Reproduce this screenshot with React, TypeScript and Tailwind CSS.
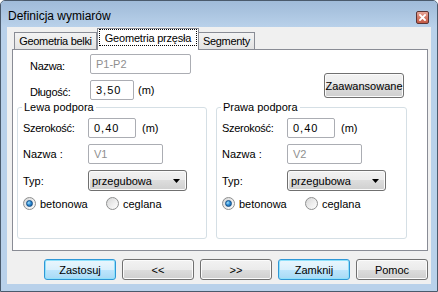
import React from "react";

const btnNormal =
  "border-[#707070] bg-[linear-gradient(to_bottom,#f2f2f2_0%,#ebebeb_50%,#dddddd_50%,#cfcfcf_100%)] shadow-[inset_0_0_0_1px_#fbfbfb]";
const btnDefault =
  "border-[#2f97d6] bg-[linear-gradient(to_bottom,#eaf6fd_0%,#d9f0fc_50%,#bee6fd_50%,#a7d9f5_100%)] shadow-[inset_0_0_0_1px_#8fe1fb]";

function Btn({ children, def }: { children: React.ReactNode; def?: boolean }) {
  return (
    <div
      className={`flex h-[21px] w-[72px] items-center justify-center rounded-[3px] border text-[11px] leading-[14px] text-black ${
        def ? btnDefault : btnNormal
      }`}
    >
      {children}
    </div>
  );
}

function Field({
  w,
  value,
  disabled,
  wide,
}: {
  w: string;
  value: string;
  disabled?: boolean;
  wide?: boolean;
}) {
  return (
    <div
      className={`flex h-[20px] shrink-0 items-center rounded-[2px] border border-[#abadb3] bg-white pl-[5px] text-[11px] leading-[14px] ${w} ${
        disabled ? "text-[#8f8f8f]" : "text-black"
      } ${wide ? "tracking-[1px]" : ""}`}
    >
      {value}
    </div>
  );
}

function Select() {
  return (
    <div className="flex h-[21px] w-[99px] items-center justify-between rounded-[3px] border border-[#707070] bg-[linear-gradient(to_bottom,#f2f2f2_0%,#ebebeb_50%,#dddddd_50%,#cfcfcf_100%)] pl-[3px] pr-[6px] text-[11px] leading-[14px] text-black shadow-[inset_0_0_0_1px_#fbfbfb]">
      <span>przegubowa</span>
      <svg width="7" height="4" viewBox="0 0 7 4">
        <path d="M0 0H7L3.5 4Z" fill="#000" />
      </svg>
    </div>
  );
}

function Radio({ checked, label }: { checked?: boolean; label: string }) {
  return (
    <div className="flex items-center">
      <span className="flex h-[13px] w-[13px] items-center justify-center rounded-full border border-[#8e8f8f] bg-[linear-gradient(135deg,#d6d6d6_0%,#f0f0f0_60%,#fdfdfd_100%)]">
        {checked && (
          <span className="h-[7px] w-[7px] rounded-full border border-[#124d86] bg-[radial-gradient(circle_at_35%_35%,#a6e3fc_0%,#2f8fd8_45%,#0f4f8f_100%)]" />
        )}
      </span>
      <span className="ml-[4px] text-[11px] leading-[14px] text-black">{label}</span>
    </div>
  );
}

function Group({ title, name, w }: { title: string; name: string; w: string }) {
  return (
    <fieldset className={`h-[139px] ${w} rounded-[3px] border border-[#d5dfe5] px-[5px]`}>
      <legend className="ml-[-1px] px-[2px] text-[11px] leading-[14px] text-black">{title}</legend>
      <div className="flex flex-col gap-[6px] pt-[4px]">
        <div className="flex items-center">
          <span className="w-[65px] text-[11px] leading-[14px] tracking-[-0.3px]">Szerokość:</span>
          <Field w="w-[48px]" value="0,40" wide />
          <span className="ml-[6px] text-[11px] leading-[14px]">(m)</span>
        </div>
        <div className="flex items-center">
          <span className="w-[65px] text-[11px] leading-[14px]">Nazwa :</span>
          <Field w="w-[75px]" value={name} disabled />
        </div>
        <div className="flex items-center">
          <span className="w-[65px] text-[11px] leading-[14px]">Typ:</span>
          <Select />
        </div>
        <div className="flex h-[13px] items-center">
          <div className="w-[83px]">
            <Radio checked label="betonowa" />
          </div>
          <Radio label="ceglana" />
        </div>
      </div>
    </fieldset>
  );
}

export default function App() {
  return (
    <div className="flex h-[292px] w-[438px] flex-col rounded-t-[5px] border border-[#4a5a6c] bg-[#b9d1ea] font-['Liberation_Sans',Arial,sans-serif] text-black">
      {/* title bar */}
      <div className="flex h-[26px] shrink-0 items-start justify-between rounded-t-[4px] bg-[linear-gradient(to_bottom,#a0bbd9_0%,#a9c3df_40%,#b9d1ea_100%)] pl-[7px] pr-[8px]">
        <span className="mt-[8px] text-[12px] leading-[14px] text-black">Definicja wymiarów</span>
        <div className="mt-[10px] flex h-[13px] w-[13px] items-center justify-center rounded-[2px] border border-[#5b3434] bg-[linear-gradient(to_bottom,#e8a597_0%,#d47a68_50%,#c45a45_100%)]">
          <svg width="7" height="7" viewBox="0 0 7 7">
            <path d="M1 1L6 6M6 1L1 6" stroke="#fff" strokeWidth="1.8" strokeLinecap="square" />
          </svg>
        </div>
      </div>

      {/* client area */}
      <div className="mx-[6px] flex h-[257px] w-[424px] flex-col bg-[#f0f0f0] pl-[5px] pr-[3px]">
        {/* tab strip */}
        <div className="flex h-[22px] items-end pl-[2px]">
          <div className="flex h-[17px] w-[83px] items-center justify-center border border-b-0 border-[#898c95] bg-[linear-gradient(to_bottom,#f3f3f3,#e3e3e3)] text-[11px] leading-[14px] tracking-[-0.3px]">
            Geometria belki
          </div>
          <div className="relative z-10 -mb-px flex h-[22px] w-[102px] items-start justify-center border border-b-0 border-[#898c95] bg-white">
            <div className="flex h-[17px] w-[98px] items-center justify-center border border-dotted border-black text-[11px] leading-[14px] tracking-[-0.2px]">
              Geometria przęsła
            </div>
          </div>
          <div className="-ml-px flex h-[17px] w-[57px] items-center justify-center border border-b-0 border-[#898c95] bg-[linear-gradient(to_bottom,#f3f3f3,#e3e3e3)] text-[11px] leading-[14px] tracking-[-0.3px]">
            Segmenty
          </div>
        </div>

        {/* tab panel */}
        <div className="flex h-[202px] flex-col border border-[#898c95] bg-white pl-[4px]">
          <div className="flex justify-between">
            <div className="flex flex-col gap-[6px] pl-[13px] pt-[4px]">
              <div className="flex items-center">
                <span className="mt-[3px] w-[60px] text-[11px] leading-[14px] tracking-[-0.3px]">Nazwa:</span>
                <Field w="w-[101px]" value="P1-P2" disabled />
              </div>
              <div className="flex items-center">
                <span className="mt-[3px] w-[60px] text-[11px] leading-[14px] tracking-[-0.3px]">Długość:</span>
                <Field w="w-[44px]" value="3,50" wide />
                <span className="ml-[4px] text-[11px] leading-[14px]">(m)</span>
              </div>
            </div>
            <div className="mr-[23px] mt-[23px] flex h-[25px] w-[80px] items-center justify-center rounded-[3px] border border-[#707070] bg-[linear-gradient(to_bottom,#f2f2f2_0%,#ebebeb_50%,#dddddd_50%,#cfcfcf_100%)] text-[11px] leading-[14px] shadow-[inset_0_0_0_1px_#fbfbfb]">
              Zaawansowane
            </div>
          </div>
          <div className="flex gap-[9px]">
            <Group title="Lewa podpora" name="V1" w="w-[190px]" />
            <Group title="Prawa podpora" name="V2" w="w-[191px]" />
          </div>
        </div>

        {/* buttons */}
        <div className="mt-[8px] flex justify-end gap-[6px]">
          <Btn def>Zastosuj</Btn>
          <Btn>&lt;&lt;</Btn>
          <Btn>&gt;&gt;</Btn>
          <Btn def>Zamknij</Btn>
          <Btn>Pomoc</Btn>
        </div>
      </div>
    </div>
  );
}
